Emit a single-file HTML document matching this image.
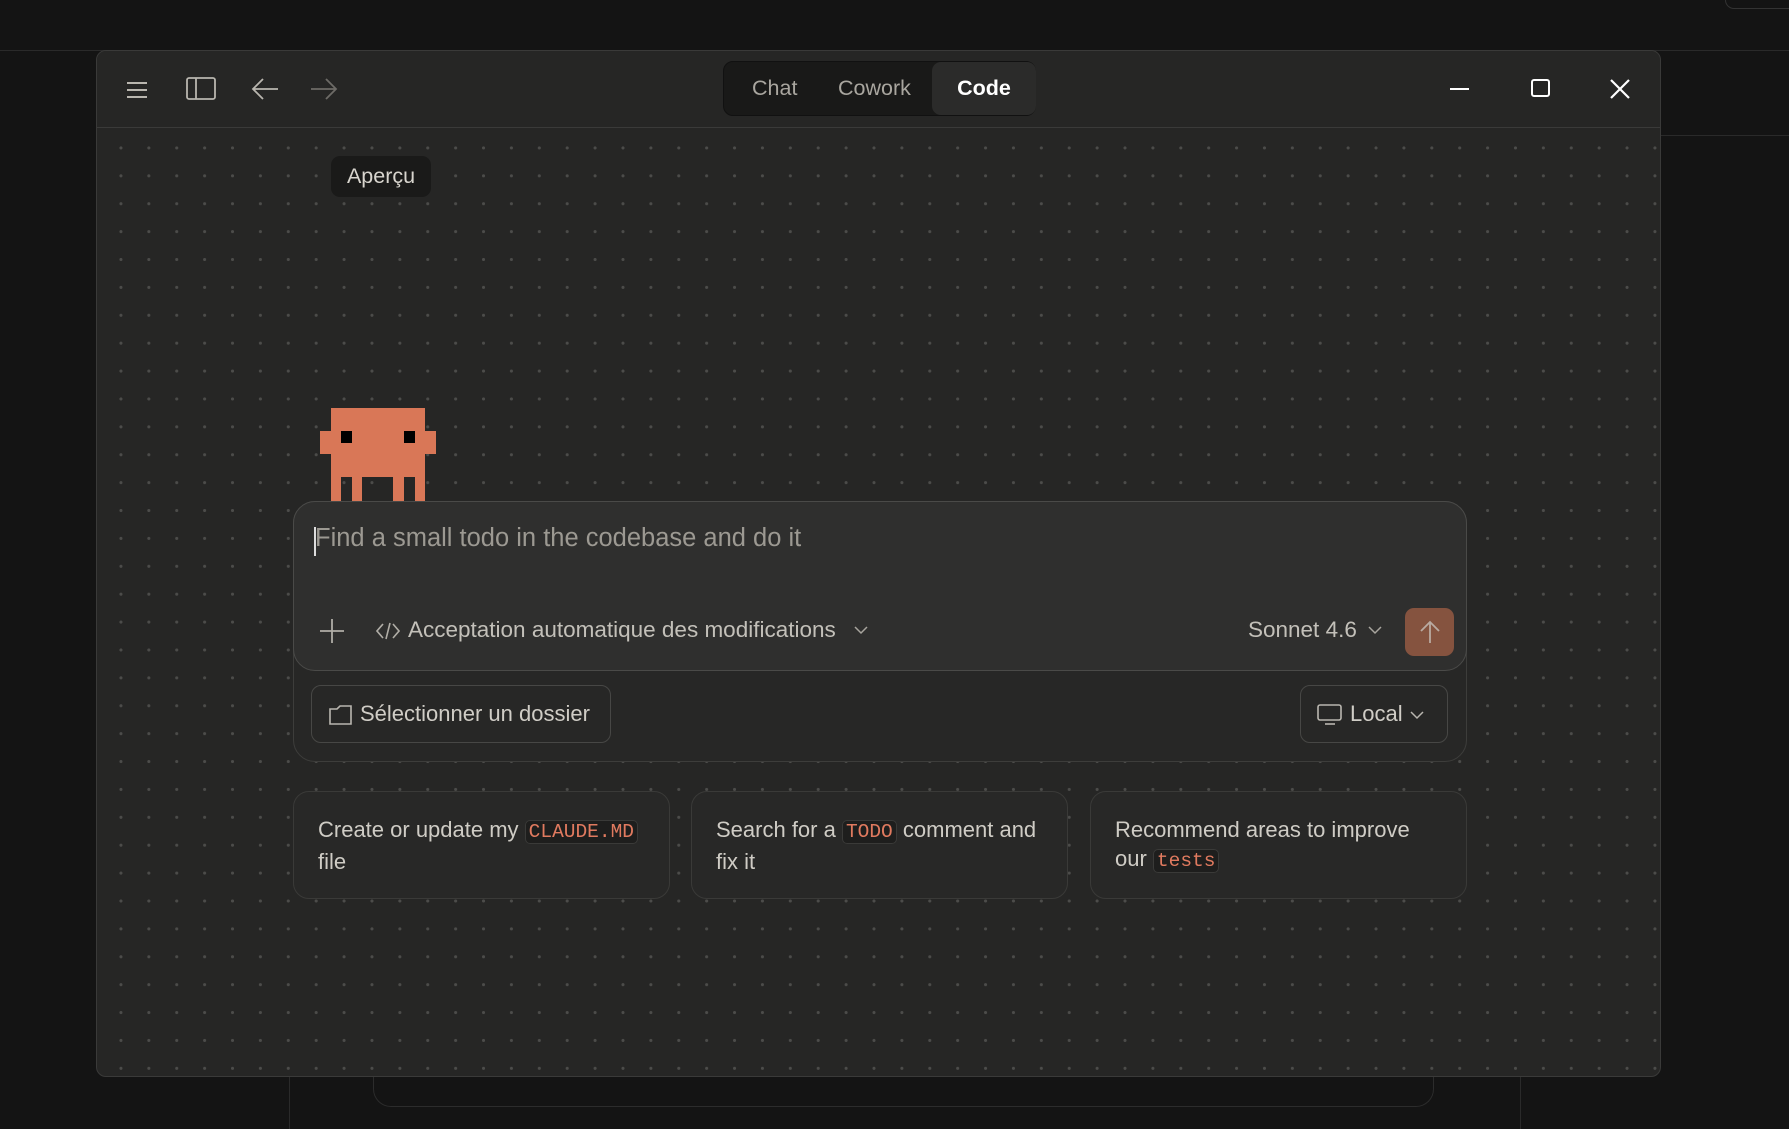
<!DOCTYPE html>
<html><head><meta charset="utf-8"><style>
*{box-sizing:border-box;margin:0;padding:0}
body{width:1789px;height:1129px;background:#141414;position:relative;overflow:hidden;font-family:"Liberation Sans",sans-serif;color:#c9c6bf}
.abs{position:absolute}
.win{left:96px;top:50px;width:1565px;height:1027px;border:1px solid #3a3a39;border-radius:10px;background:#262625;overflow:hidden}
.dots{left:0;top:77px;right:0;bottom:0;background-image:radial-gradient(circle,#4c4c4a 1.4px,transparent 1.7px);background-size:27.9px 27.9px;background-position:10px 6px}
.title{left:0;top:0;right:0;height:77px;border-bottom:1px solid #3a3a39;background:#262625}
.seg{left:626px;top:10px;width:313px;height:55px;background:#191918;border-radius:10px;border:1px solid #111}
.seg span{position:absolute;top:0;line-height:53px;font-size:21.5px;color:#a9a69f}
.seg .on{left:208px;width:104px;height:53px;background:#2b2b2a;border-radius:9px;color:#fff;font-weight:bold;text-align:center;top:0}
.tip{left:234px;top:105px;width:100px;height:41px;background:#1a1a19;border-radius:9px;line-height:41px;text-align:center;font-size:21.5px;color:#d8d5ce}
.px{position:absolute;background:#d97757}
.outer{left:196px;top:450px;width:1174px;height:261px;border:1px solid #3d3d3b;border-radius:22px;background:#272726}
.inp{left:-1px;top:-1px;width:1174px;height:170px;border:1px solid #4a4a48;border-radius:22px;background:#2f2f2e}
.btn{border:1px solid #474745;border-radius:10px;height:58px;font-size:22px;color:#d0cdc6;line-height:56px}
.card{top:740px;width:377px;height:108px;border:1px solid #3a3a38;border-radius:16px;background:#282827;padding:23px 24px;font-size:22px;line-height:29px;color:#cfccc5}
code{font-family:"Liberation Mono",monospace;color:#e07a5f;background:#1e1e1d;border:1px solid #3a3a38;border-radius:5px;padding:0 3px;font-size:19.5px}
</style></head><body>
<div class="abs" style="left:0;top:50px;width:1789px;height:1px;background:#2a2a2a"></div>
<div class="abs" style="left:1661px;top:135px;width:128px;height:1px;background:#2a2a2a"></div>
<div class="abs" style="left:289px;top:1077px;width:1px;height:52px;background:#2a2a2a"></div>
<div class="abs" style="left:1520px;top:1077px;width:1px;height:52px;background:#2a2a2a"></div>
<div class="abs" style="left:373px;top:1060px;width:1061px;height:47px;border:1px solid #2c2c2c;border-top:none;border-radius:0 0 18px 18px"></div>
<div class="abs" style="left:1725px;top:0;width:70px;height:9px;border:1px solid #333;border-top:none;border-radius:0 0 0 10px"></div>
<div class="abs win">
 <div class="abs dots"></div>
 <div class="abs title">
  <svg class="abs" style="left:28px;top:27px" width="24" height="24" viewBox="0 0 24 24" stroke="#b9b6af" stroke-width="2"><path d="M2 5h20M2 12h20M2 19h20"/></svg>
  <svg class="abs" style="left:89px;top:25px" width="30" height="26" viewBox="0 0 30 26" fill="none" stroke="#b9b6af" stroke-width="1.8"><rect x="1" y="2" width="28" height="21" rx="2"/><path d="M10 2v21"/></svg>
  <svg class="abs" style="left:153px;top:25px" width="30" height="26" viewBox="0 0 30 26" fill="none" stroke="#b9b6af" stroke-width="1.8"><path d="M28 13H3M13 3L3 13l10 10"/></svg>
  <svg class="abs" style="left:212px;top:25px" width="30" height="26" viewBox="0 0 30 26" fill="none" stroke="#6d6b67" stroke-width="1.8"><path d="M2 13h25M17 3l10 10-10 10"/></svg>
  <div class="abs seg"><span style="left:28px">Chat</span><span style="left:114px">Cowork</span><span class="on">Code</span></div>
  <svg class="abs" style="left:1351px;top:26px" width="24" height="24" stroke="#fff" stroke-width="2"><path d="M2 12h19"/></svg>
  <svg class="abs" style="left:1432px;top:26px" width="24" height="24" fill="none" stroke="#fff" stroke-width="2"><rect x="3" y="3" width="17" height="16" rx="2"/></svg>
  <svg class="abs" style="left:1511px;top:26px" width="24" height="24" stroke="#fff" stroke-width="2.2"><path d="M3 3l18 18M21 3L3 21"/></svg>
 </div>
 <div class="abs tip">Aperçu</div>
 <div class="px" style="left:234px;top:357px;width:94px;height:69px"></div>
 <div class="px" style="left:223px;top:380px;width:11px;height:23px"></div>
 <div class="px" style="left:328px;top:380px;width:11px;height:23px"></div>
 <div class="abs" style="left:244px;top:380px;width:11px;height:12px;background:#000"></div>
 <div class="abs" style="left:307px;top:380px;width:11px;height:12px;background:#000"></div>
 <div class="px" style="left:234px;top:426px;width:10px;height:25px"></div>
 <div class="px" style="left:255px;top:426px;width:10px;height:25px"></div>
 <div class="px" style="left:296px;top:426px;width:11px;height:25px"></div>
 <div class="px" style="left:318px;top:426px;width:10px;height:25px"></div>
 <div class="abs outer">
  <div class="abs inp">
   <div class="abs" style="left:20px;top:25px;width:2px;height:29px;background:#ddd"></div>
   <div class="abs" style="left:21px;top:22px;font-size:25.5px;color:#9c9992">Find a small todo in the codebase and do it</div>
   <svg class="abs" style="left:25px;top:116px" width="26" height="26" stroke="#b0ada6" stroke-width="1.8"><path d="M13 1v24M1 13h24"/></svg>
   <svg class="abs" style="left:82px;top:119px" width="24" height="20" fill="none" stroke="#b0ada6" stroke-width="1.6"><path d="M7 3L1 10l6 7M17 3l6 7-6 7M14 2l-4 16"/></svg>
   <div class="abs" style="left:114px;top:115px;font-size:22.5px;color:#c3c0b9">Acceptation automatique des modifications</div>
   <svg class="abs" style="left:559px;top:121px" width="16" height="14" fill="none" stroke="#a8a59e" stroke-width="1.5"><path d="M2 4l6 6 6-6"/></svg>
   <div class="abs" style="left:954px;top:115px;font-size:22.5px;color:#c3c0b9">Sonnet 4.6</div>
   <svg class="abs" style="left:1073px;top:121px" width="16" height="14" fill="none" stroke="#a8a59e" stroke-width="1.5"><path d="M2 4l6 6 6-6"/></svg>
   <div class="abs" style="left:1111px;top:106px;width:49px;height:48px;background:#85533f;border-radius:9px"></div>
   <svg class="abs" style="left:1123px;top:117px" width="26" height="26" fill="none" stroke="#b9aaa1" stroke-width="1.8"><path d="M13 24V3M4 12l9-9 9 9"/></svg>
  </div>
  <div class="abs btn" style="left:17px;top:183px;width:300px;padding-left:48px">Sélectionner un dossier</div>
  <svg class="abs" style="left:35px;top:202px" width="24" height="22" fill="none" stroke="#b9b6af" stroke-width="1.6"><path d="M1 5h7l3-3h11v18H1z"/></svg>
  <div class="abs btn" style="left:1006px;top:183px;width:148px;padding-left:49px">Local</div>
  <svg class="abs" style="left:1023px;top:202px" width="26" height="22" fill="none" stroke="#b9b6af" stroke-width="1.6"><rect x="1" y="1" width="23" height="15" rx="2"/><path d="M8 20h10"/></svg>
  <svg class="abs" style="left:1115px;top:206px" width="16" height="14" fill="none" stroke="#b9b6af" stroke-width="1.5"><path d="M2 4l6 6 6-6"/></svg>
 </div>
 <div class="abs card" style="left:196px">Create or update my <code>CLAUDE.MD</code><br>file</div>
 <div class="abs card" style="left:594px">Search for a <code>TODO</code> comment and<br>fix it</div>
 <div class="abs card" style="left:993px">Recommend areas to improve<br>our <code>tests</code></div>
</div>
</body></html>
